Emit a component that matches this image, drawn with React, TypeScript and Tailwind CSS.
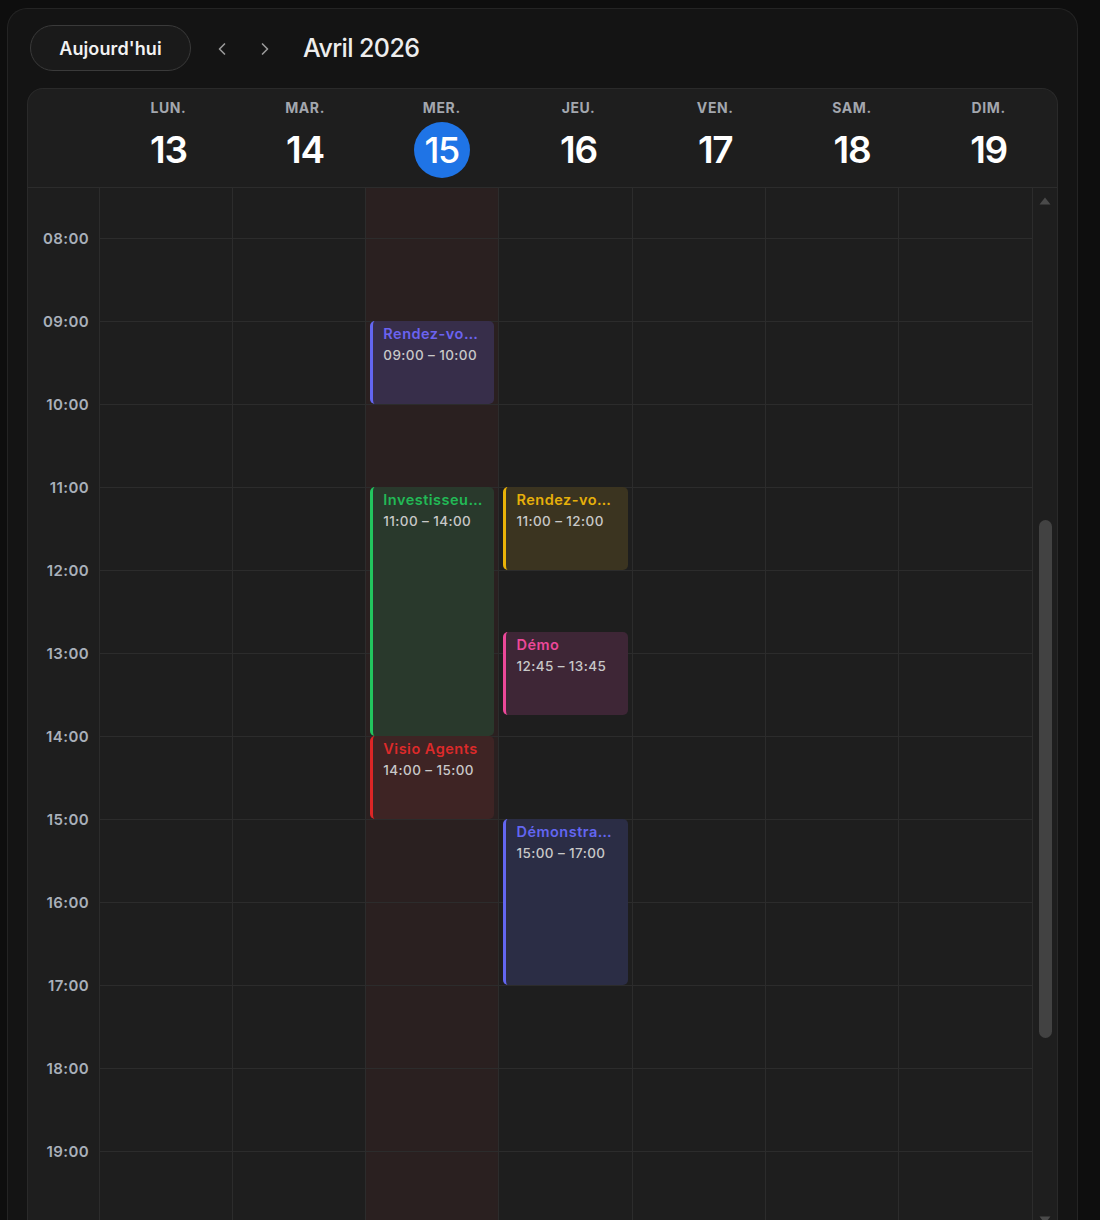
import { ChevronLeft, ChevronRight } from "lucide-react";

const HOUR = 83;
const TOP = 50; // 08:00 line offset in the body

const days = [
  { label: "LUN.", num: 13 },
  { label: "MAR.", num: 14 },
  { label: "MER.", num: 15, today: true },
  { label: "JEU.", num: 16 },
  { label: "VEN.", num: 17 },
  { label: "SAM.", num: 18 },
  { label: "DIM.", num: 19 },
];

const hours = ["08:00", "09:00", "10:00", "11:00", "12:00", "13:00", "14:00", "15:00", "16:00", "17:00", "18:00", "19:00"];

type Ev = { day: number; title: string; time: string; start: number; end: number; bg: string; bar: string; fg: string };

const events: Ev[] = [
  { day: 2, title: "Rendez-vous client", time: "09:00 – 10:00", start: 9, end: 10, bg: "bg-[#372e4a]", bar: "border-[#6366f1]", fg: "text-[#6b63f0]" },
  { day: 2, title: "Investisseurs potentiels", time: "11:00 – 14:00", start: 11, end: 14, bg: "bg-[#29392c]", bar: "border-[#22c55e]", fg: "text-[#22b956]" },
  { day: 2, title: "Visio Agents", time: "14:00 – 15:00", start: 14, end: 15, bg: "bg-[#3e2424]", bar: "border-[#dc2626]", fg: "text-[#dc2a2a]" },
  { day: 3, title: "Rendez-vous partenaire", time: "11:00 – 12:00", start: 11, end: 12, bg: "bg-[#3b3420]", bar: "border-[#eab308]", fg: "text-[#e6b00a]" },
  { day: 3, title: "Démo", time: "12:45 – 13:45", start: 12.75, end: 13.75, bg: "bg-[#3e2636]", bar: "border-[#ec4899]", fg: "text-[#ec4899]" },
  { day: 3, title: "Démonstration produit", time: "15:00 – 17:00", start: 15, end: 17, bg: "bg-[#2b2d45]", bar: "border-[#6366f1]", fg: "text-[#6366f1]" },
];

function EventCard({ ev }: { ev: Ev }) {
  const top = TOP + (ev.start - 8) * HOUR;
  const height = (ev.end - ev.start) * HOUR;
  return (
    <div
      className={`absolute left-[4px] right-[4px] rounded-[5px] border-l-[3px] ${ev.bar} ${ev.bg} pl-[10px] pr-[6px] pt-[4px] overflow-hidden`}
      style={{ top, height }}
    >
      <div className={`max-w-[100px] truncate text-[14.5px] font-semibold leading-[18px] tracking-[0.5px] ${ev.fg}`}>{ev.title}</div>
      <div className="mt-[4px] whitespace-nowrap text-[13.5px] font-medium leading-[16px] tracking-[0.4px] text-[#c8c8c8]">{ev.time}</div>
    </div>
  );
}

export default function App() {
  return (
    <div className="min-h-[1240px] bg-[#0e0e0e] pt-[8px] pl-[7px] pr-[22px] font-['Inter','Noto_Sans',sans-serif] text-white">
      <div className="rounded-t-[20px] border border-b-0 border-[#242424] bg-[#141414] px-[19px] pt-[16px]">
        {/*Toolbar*/}
        <div className="flex items-center">
          <button className="ml-[3px] flex h-[46px] w-[161px] items-center justify-center rounded-full border border-[#3a3a3a] bg-[#1a1a1a] text-[18px] font-semibold tracking-[0.1px] text-[#f2f2f2]">
            Aujourd'hui
          </button>
          <button className="ml-[19px] mt-[2px] flex h-[24px] w-[24px] items-center justify-center text-[#9a9a9a]">
            <ChevronLeft size={20} strokeWidth={2} />
          </button>
          <button className="ml-[19px] mt-[2px] flex h-[24px] w-[24px] items-center justify-center text-[#9a9a9a]">
            <ChevronRight size={20} strokeWidth={2} />
          </button>
          <h1 className="ml-[26px] mt-[2px] text-[25px] font-medium tracking-[-0.6px] text-[#ededed]">Avril 2026</h1>
        </div>

        {/*Calendar*/}
        <div className="mt-[17px] overflow-hidden rounded-t-[16px] border border-b-0 border-[#2a2a2a] bg-[#1e1e1e]">
          <div className="grid h-[99px] grid-cols-[72px_repeat(7,1fr)] border-b border-[#2c2c2c]">
            <div />
            {days.map((d) => (
              <div key={d.label} className="flex flex-col items-center pt-[8px]">
                <span className="text-[14px] font-bold tracking-[0.6px] text-[#a3a7ae]">{d.label}</span>
                {d.today ? (
                  <span className="mt-[4px] flex h-[56px] w-[56px] items-center justify-center rounded-full bg-[#1f74e6] text-[36px] font-medium tracking-[-1.2px] text-white">
                    {d.num}
                  </span>
                ) : (
                  <span className="mt-[4px] flex h-[56px] items-center text-[37px] font-semibold tracking-[-1.2px] text-white">{d.num}</span>
                )}
              </div>
            ))}
          </div>

          <div className="flex h-[1040px] overflow-hidden">
            {/*Hours*/}
            <div className="w-[72px] shrink-0 border-r border-[#2c2c2c] pt-[9.5px]">
              {hours.map((h) => (
                <div key={h} className="flex h-[83px] items-center justify-end pr-[10px] text-[15px] font-semibold tracking-[0.4px] text-[#a9b0ba]">
                  {h}
                </div>
              ))}
            </div>

            {/*Days*/}
            <div className="grid flex-1 grid-cols-7">
              {days.map((d, i) => (
                <div key={d.label} className={`relative ${i < 6 ? "border-r border-[#2c2c2c]" : ""} ${d.today ? "bg-[#2a2020]" : ""}`}>
                  <div className="h-[51px] border-b border-[#2c2c2c]" />
                  {[...hours, "20:00"].map((h) => (
                    <div key={h} className="h-[83px] border-b border-[#2c2c2c]" />
                  ))}
                  {events
                    .filter((e) => e.day === i)
                    .map((e) => (
                      <EventCard key={e.title} ev={e} />
                    ))}
                </div>
              ))}
            </div>

            {/*Scrollbar*/}
            <div className="flex w-[25px] shrink-0 flex-col items-center border-l border-[#2c2c2c] bg-[#1e1e1e] pt-[9px]">
              <svg width="12" height="8" viewBox="0 0 12 8">
                <path d="M6 0.5 L11.5 7.5 L0.5 7.5 Z" fill="#4a4a4a" />
              </svg>
              <div className="mt-[315px] h-[518px] w-[13px] rounded-full bg-[#424242]" />
              <div className="mt-auto mb-[4px]">
                <svg width="12" height="8" viewBox="0 0 12 8">
                  <path d="M6 7.5 L11.5 0.5 L0.5 0.5 Z" fill="#4a4a4a" />
                </svg>
              </div>
            </div>
          </div>
        </div>
      </div>
    </div>
  );
}
